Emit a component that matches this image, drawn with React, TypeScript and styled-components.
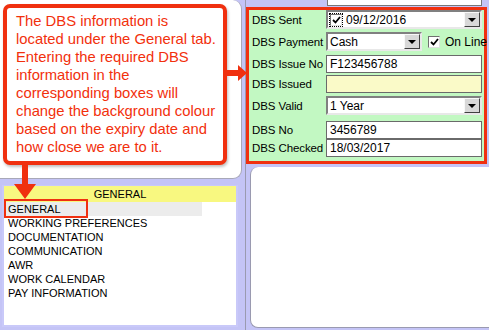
import React from "react";
import styled, { createGlobalStyle } from "styled-components";

const GlobalStyle = createGlobalStyle`
  html, body {
    margin: 0;
    padding: 0;
    background: #c4c4f6;
  }
`;

const Screen = styled.div`
  width: 489px;
  height: 330px;
  display: grid;
  grid-template-columns: 245px 1fr;
  background: #c4c4f6;
  overflow: hidden;
  font-family: "Liberation Sans", Arial, sans-serif;
  position: relative;
`;

const LeftCol = styled.div`
  display: flex;
  flex-direction: column;
  gap: 6px;
`;

const NotePanel = styled.div`
  height: 179px;
  width: 242px;
  box-sizing: border-box;
  background: #fff;
  border: 1px solid #a8a8b8;
  border-left: none;
  border-top: none;
  border-radius: 0 9px 9px 0;
  padding: 4px 0 0 3px;
  flex-shrink: 0;
`;

const Callout = styled.div`
  width: 224px;
  height: 161px;
  box-sizing: border-box;
  border: 4px solid #f0300f;
  border-radius: 7px;
  background: #fff;
  padding: 4px 0 0 9px;
  color: #f2300c;
  font-family: "Liberation Sans", Helvetica, Arial, sans-serif;
  font-size: 14.8px;
  line-height: 18px;
  white-space: nowrap;
  box-shadow: 1px 2px 3px rgba(0, 0, 0, 0.25);
`;

const RightArrow = styled.svg`
  position: absolute;
  left: 226px;
  top: 64px;
  z-index: 3;
`;

const DownArrow = styled.svg`
  position: absolute;
  left: 14px;
  top: 164px;
  z-index: 3;
`;

const ListPanel = styled.div`
  margin-left: 2px;
  width: 236px;
  height: 142px;
  box-sizing: border-box;
  background: #fff;
  border: 2px solid #c9c9f9;
  border-top: 1px solid #c9c9f9;
  display: flex;
  flex-direction: column;
`;

const ListHeader = styled.div`
  background: #f8f880;
  height: 16px;
  line-height: 16px;
  text-align: center;
  font-size: 11px;
  color: #000;
`;

const ListItem = styled.div<{ $active?: boolean }>`
  height: 14px;
  line-height: 14px;
  width: 194px;
  padding-left: 4px;
  font-size: 11px;
  color: #000;
  background: ${(p) => (p.$active ? "#ececec" : "transparent")};
  position: relative;
`;

const ItemMark = styled.span`
  position: absolute;
  left: 0;
  top: -3px;
  width: 80px;
  height: 15px;
  border: 2px solid #f0300f;
`;

const RightCol = styled.div`
  display: flex;
  flex-direction: column;
  border-left: 1px solid #9a9ab0;
`;

const TopCombo = styled.div`
  margin-left: 81px;
  width: 155px;
  height: 6px;
  box-sizing: border-box;
  background: #fff;
  border: 1px solid #777;
  border-top: none;
  flex-shrink: 0;
`;

const FormPanel = styled.div`
  margin-top: 1px;
  width: 241px;
  height: 157px;
  box-sizing: border-box;
  border: 3px solid #f0300f;
  background: #c2f8c2;
  padding: 0 0 0 3px;
  display: flex;
  flex-direction: column;
  flex-shrink: 0;
`;

const Row = styled.div<{ $mt: number }>`
  display: flex;
  align-items: center;
  margin-top: ${(p) => p.$mt}px;
`;

const Label = styled.div`
  width: 74px;
  flex-shrink: 0;
  font-size: 11.5px;
  letter-spacing: -0.1px;
  color: #000;
  white-space: nowrap;
`;

const Field = styled.div<{ $w?: number; $bg?: string }>`
  width: ${(p) => (p.$w ? `${p.$w}px` : "156px")};
  height: 18px;
  flex-shrink: 0;
  box-sizing: border-box;
  background: ${(p) => p.$bg || "#fff"};
  border: 1px solid #6a6a6a;
  font-size: 12px;
  line-height: 16px;
  padding-left: 3px;
  display: flex;
  align-items: center;
  color: #000;
`;

const Combo = styled(Field)`
  border: 2px solid;
  border-color: #808080 #e8e8e8 #e8e8e8 #808080;
  padding-left: 2px;
  justify-content: space-between;
  height: 19px;
`;

const DropBtn = styled.div`
  width: 16px;
  height: 15px;
  box-sizing: border-box;
  background: #d8d8d8;
  border: 1px solid;
  border-color: #f8f8f8 #404040 #404040 #f8f8f8;
  display: flex;
  align-items: center;
  justify-content: center;
`;

const Caret = styled.span`
  width: 0;
  height: 0;
  border-left: 4px solid transparent;
  border-right: 4px solid transparent;
  border-top: 4px solid #000;
`;

const DateValue = styled.span`
  display: flex;
  align-items: center;
`;

const CheckBox = styled.span<{ $dotted?: boolean }>`
  display: inline-flex;
  align-items: center;
  justify-content: center;
  width: 12px;
  height: 12px;
  box-sizing: border-box;
  background: #fff;
  border: 1px solid;
  border-color: #707070 #e0e0e0 #e0e0e0 #707070;
  outline: ${(p) => (p.$dotted ? "1px dotted #000" : "none")};
  margin-right: ${(p) => (p.$dotted ? "4px" : "5px")};
`;

const OnLine = styled.div`
  display: flex;
  align-items: center;
  margin-left: 6px;
  font-size: 12px;
  color: #000;
  white-space: nowrap;
`;

const BlankPanel = styled.div`
  margin-top: 3px;
  margin-left: 4px;
  flex: 1;
  margin-bottom: 2px;
  background: #fff;
  border-left: 1px solid #9a9ab0;
  border-bottom: 1px solid #9a9ab0;
  border-radius: 8px 0 0 8px;
`;

const Tick = () => (
  <svg width="9" height="8" viewBox="0 0 9 8">
    <path d="M1 4 L3.5 6.5 L8 1" stroke="#000" strokeWidth="1.8" fill="none" />
  </svg>
);

const Dropdown = () => (
  <DropBtn>
    <Caret />
  </DropBtn>
);

const noteLines = [
  "The DBS information is",
  "located under the General tab.",
  "Entering the required DBS",
  "information in the",
  "corresponding boxes will",
  "change the background colour",
  "based on the expiry date and",
  "how close we are to it.",
];

const items = [
  "WORKING PREFERENCES",
  "DOCUMENTATION",
  "COMMUNICATION",
  "AWR",
  "WORK CALENDAR",
  "PAY INFORMATION",
];

export default function App() {
  return (
    <>
      <GlobalStyle />
      <Screen>
        <LeftCol>
          <NotePanel>
            <Callout>
              {noteLines.map((l) => (
                <div key={l}>{l}</div>
              ))}
            </Callout>
          </NotePanel>
          <ListPanel>
            <ListHeader>GENERAL</ListHeader>
            <ListItem $active>
              <ItemMark />
              GENERAL
            </ListItem>
            {items.map((t) => (
              <ListItem key={t}>{t}</ListItem>
            ))}
          </ListPanel>
        </LeftCol>
        <RightCol>
          <TopCombo />
          <FormPanel>
            <Row $mt={0}>
              <Label>DBS Sent</Label>
              <Combo>
                <DateValue>
                  <CheckBox $dotted>
                    <Tick />
                  </CheckBox>
                  09/12/2016
                </DateValue>
                <Dropdown />
              </Combo>
            </Row>
            <Row $mt={3}>
              <Label>DBS Payment</Label>
              <Combo $w={96}>
                Cash
                <Dropdown />
              </Combo>
              <OnLine>
                <CheckBox>
                  <Tick />
                </CheckBox>
                On Line
              </OnLine>
            </Row>
            <Row $mt={4}>
              <Label>DBS Issue No</Label>
              <Field>F123456788</Field>
            </Row>
            <Row $mt={2}>
              <Label>DBS Issued</Label>
              <Field $bg="#fafac8" />
            </Row>
            <Row $mt={3}>
              <Label>DBS Valid</Label>
              <Combo>
                1 Year
                <Dropdown />
              </Combo>
            </Row>
            <Row $mt={6}>
              <Label>DBS No</Label>
              <Field>3456789</Field>
            </Row>
            <Row $mt={0}>
              <Label>DBS Checked</Label>
              <Field>18/03/2017</Field>
            </Row>
          </FormPanel>
          <BlankPanel />
        </RightCol>
        <RightArrow width="22" height="18" viewBox="0 0 22 18">
          <path d="M0 6 H12 V1 L21 9 L12 17 V12 H0 Z" fill="#f0300f" />
        </RightArrow>
        <DownArrow width="24" height="38" viewBox="0 0 24 38">
          <path d="M8 0 H14 V20 H22 L11 35 L0 20 H8 Z" fill="#f0300f" />
        </DownArrow>
      </Screen>
    </>
  );
}
